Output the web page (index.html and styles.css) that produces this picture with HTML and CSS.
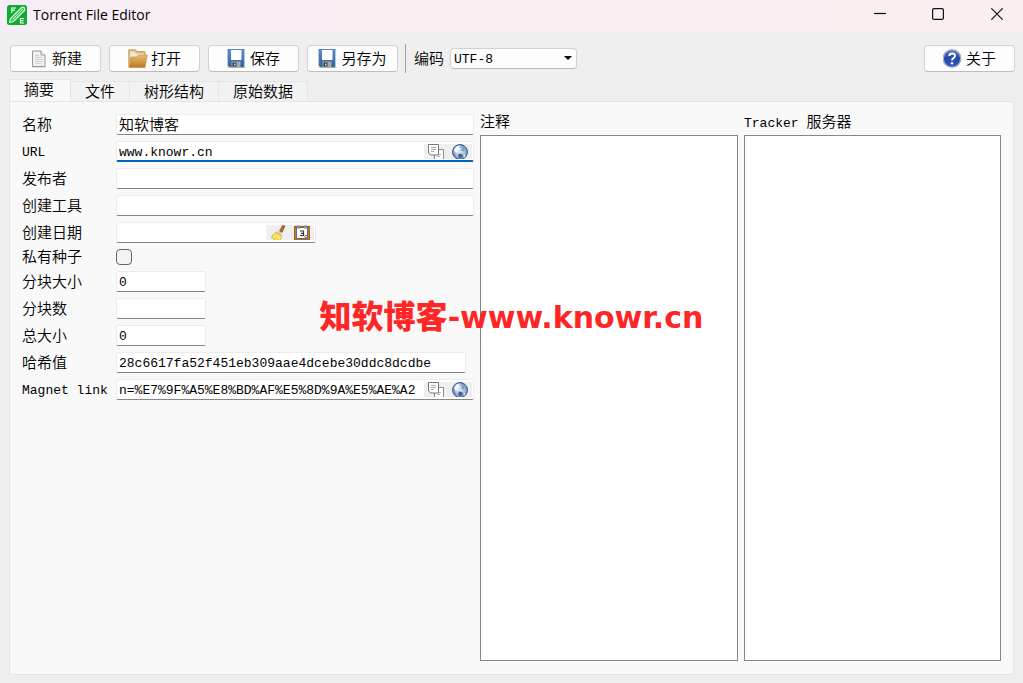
FILE: index.html
```html
<!DOCTYPE html>
<html lang="zh-CN">
<head>
<meta charset="utf-8">
<meta name="viewport" content="width=device-width, initial-scale=1">
<title>Torrent File Editor</title>
<link rel="stylesheet" href="styles.css">
</head>
<body>
<svg class="defs" width="0" height="0" aria-hidden="true">
  <defs>
    <linearGradient id="folder" x1="0" y1="0" x2="0" y2="1"><stop offset="0" stop-color="#e9bd72"/><stop offset="1" stop-color="#b67a22"/></linearGradient>
    <linearGradient id="steel" x1="0" y1="0" x2="0" y2="1"><stop offset="0" stop-color="#5f92cf"/><stop offset="1" stop-color="#2f5c9d"/></linearGradient>
    <linearGradient id="help" x1="0" y1="0" x2="0" y2="1"><stop offset="0" stop-color="#5a7fd6"/><stop offset="0.5" stop-color="#2247ad"/><stop offset="1" stop-color="#3159c4"/></linearGradient>
    <radialGradient id="sea"><stop offset="0" stop-color="#e2ecf7"/><stop offset="0.7" stop-color="#a3bbdb"/><stop offset="1" stop-color="#5676a8"/></radialGradient>
    <symbol id="i-save" viewBox="0 0 20 20">
      <path d="M0 18h19v1H0z" fill="#d5d5d5"/>
      <path d="M1 0h16v18H2.500L1 16.500z" fill="url(#steel)" stroke="#4a78b4" stroke-width=".8"/>
      <path d="M4 1h10.500v10H4z" fill="#fff"/>
      <path d="M4.500 12.500h9V18h-9z" fill="#a9aaa8"/>
      <path d="M5.500 13.500h4v4h-4z" fill="#333"/><path d="M7 14.500h1.500v2H7z" fill="#e8e0c8"/>
    </symbol>
    <symbol id="i-copy" viewBox="0 0 16 15">
      <path d="M6.500 5.500h9V16h-9z" fill="#fff" stroke="#8b8d88"/>
      <path d="M9 10.500h4M9 12.500h3" stroke="#b5b5b2"/>
      <path d="M.5.500h10v10.500H3l-2.500-2z" fill="#fff" stroke="#777974"/>
      <path d="M3 3.500h5M3 5.500h5M3 7.500h3" stroke="#aaa"/>
    </symbol>
    <symbol id="i-globe" viewBox="0 0 16 15">
      <circle cx="8" cy="8" r="7.500" fill="url(#sea)" stroke="#456594"/>
      <path d="M2 5.500L5 2l3-.5L7 4l2 1-3 1.500L5.500 9 3 8z" fill="#f4f7fa"/>
      <path d="M10 2l2 1.500 1 3-2 1-2-1.500 1-2z" fill="#7f9dc6"/>
      <path d="M7 9.500l3 .5 1 2-2 2H7.500L6 12z" fill="#426494"/>
      <path d="M2 9l2 2v2.500z" fill="#7893ba"/>
      <path d="M11.500 12l2-1.500-1 3z" fill="#f4f7fa"/>
    </symbol>
  </defs>
</svg>

<div class="window">
  <header class="titlebar">
    <svg class="logo" viewBox="0 0 20 20" aria-hidden="true">
      <rect width="20" height="20" rx="2.500" fill="#0cae2f"/>
      <path d="M4 3h5M4.800 3v5M4.800 5.200h3.200" stroke="#fff" stroke-width="1.200" fill="none"/>
      <path d="M17 13.500h-3.500v4.500H17M13.500 15.700h3" stroke="#fff" stroke-width="1.200" fill="none"/>
      <path d="M2.500 17.500l1-4L14.500 2.500q2-1 3 .5t-.5 3L6.500 16.500z" fill="#3fc259" stroke="#e0f8e4" stroke-width="1.100"/>
      <path d="M5.500 14.500L16 4" stroke="#e0f8e4" stroke-width=".9"/>
    </svg>
    <h1 class="title">Torrent File Editor</h1>
    <div class="controls">
      <button class="control" aria-label="Minimize"><svg viewBox="0 0 12 12"><path d="M0 5.500h12"/></svg></button>
      <button class="control" aria-label="Maximize"><svg viewBox="0 0 12 12"><rect x=".6" y=".6" width="10.800" height="10.800" rx="1.500"/></svg></button>
      <button class="control" aria-label="Close"><svg viewBox="0 0 12 12"><path d="M.3.300l11.400 11.400M11.700.300L.3 11.700"/></svg></button>
    </div>
  </header>

  <div class="toolbar">
    <button class="button">
      <svg class="icon" viewBox="0 0 20 20" aria-hidden="true"><path d="M3 18h14" stroke="#ccc"/><path d="M3.500 2h8.500l4 4v11.500H3.500z" fill="#f1f1ef" stroke="#969894"/><path d="M12 2v4h4" fill="#fff" stroke="#969894"/><path d="M6 6.500h4M6 8.500h7M6 10.500h8M6 12.500h8M6 14.500h6" stroke="#d2d2d0"/></svg><span>新建</span>
    </button>
    <button class="button">
      <svg class="icon" viewBox="0 0 20 20" aria-hidden="true"><path d="M.8 17.500V.800H7.500L9 2.500h8V15z" fill="#dcb67a" stroke="#c9a468"/><path d="M2 2.500h4.500L8 4.500h8V8H2z" fill="#f3e5ce"/><path d="M1 18.500L3.500 8h5L10.500 6h8.800L17 18.500z" fill="url(#folder)" stroke="#c08d42" stroke-width=".6"/></svg><span>打开</span>
    </button>
    <button class="button"><svg class="icon" aria-hidden="true"><use href="#i-save"/></svg><span>保存</span></button>
    <button class="button"><svg class="icon" aria-hidden="true"><use href="#i-save"/></svg><span>另存为</span></button>
    <span class="separator"></span>
    <label class="encoding-label" for="encoding">编码</label>
    <div class="select-wrap">
      <select id="encoding" class="select"><option>UTF-8</option></select>
      <svg class="arrow" viewBox="0 0 8 4" aria-hidden="true"><path d="M0 0h8L4 4z"/></svg>
    </div>
    <button class="button about">
      <svg class="icon" viewBox="0 0 20 20" aria-hidden="true"><circle cx="9" cy="9.500" r="8.800" fill="url(#help)" stroke="#a9adb5" stroke-width="1.400"/><path d="M6.300 7q.2-2.500 2.900-2.500T12 6.800q0 1.500-1.500 2.300T9 11.500" fill="none" stroke="#fff" stroke-width="1.900"/><circle cx="9" cy="14.300" r="1.200" fill="#fff"/></svg><span>关于</span>
    </button>
  </div>

  <main class="main">
    <div class="tabs" role="tablist">
      <button class="tab active" role="tab" aria-selected="true">摘要</button>
      <button class="tab" role="tab">文件</button>
      <button class="tab" role="tab">树形结构</button>
      <button class="tab" role="tab">原始数据</button>
    </div>
    <section class="panel" role="tabpanel">
      <form class="form">
        <label for="name">名称</label>
        <div class="field"><input id="name" class="cjk" type="text" value="知软博客"></div>
        <label class="latin" for="url">URL</label>
        <div class="field focused">
          <input id="url" type="text" value="www.knowr.cn">
          <button type="button" class="action" aria-label="复制"><svg><use href="#i-copy"/></svg></button>
          <button type="button" class="action" aria-label="打开链接"><svg><use href="#i-globe"/></svg></button>
        </div>
        <label for="publisher">发布者</label>
        <div class="field"><input id="publisher" type="text"></div>
        <label for="creator">创建工具</label>
        <div class="field"><input id="creator" type="text"></div>
        <label for="date">创建日期</label>
        <div class="field date">
          <input id="date" type="text">
          <button type="button" class="action" aria-label="清除"><svg viewBox="0 0 16 15"><path d="M9.500 6l3-5.500 2.500.5-3 6.500z" fill="#ad712d" stroke="#86521b" stroke-width=".7"/><path d="M7 5.500l5 2.500-1 2-5.500-2.500z" fill="#d8cfd3"/><path d="M5.500 7.500l6 2.500-1 4.500-5 .5-4.500-2.500z" fill="#f2dd42" stroke="#d0b322" stroke-width=".8"/><path d="M6 9l-3 4M8.500 10L6 15M10 11l-1 4" stroke="#fff5a1"/></svg></button>
          <button type="button" class="action" aria-label="选择日期"><svg viewBox="0 0 16 15"><path d="M.8 1.800h14.400V15H.8z" fill="#e0a050" stroke="#955a14" stroke-width="1.400"/><path d="M2.500 2.500h11v11h-11z" fill="#fff" stroke="#666b70"/><path d="M4.500 0v4M11.500 0v4" stroke="#9a9fa4" stroke-width="2"/><path d="M6 6h3.500v4.500H6M7 8.300h2.500" fill="none" stroke="#33383d" stroke-width="1.200"/><circle cx="12" cy="11.500" r="1.300" fill="#fff" stroke="#777"/></svg></button>
        </div>
        <label for="private">私有种子</label>
        <input id="private" class="check" type="checkbox">
        <label for="piece">分块大小</label>
        <div class="field short"><input id="piece" type="text" value="0"></div>
        <label for="count">分块数</label>
        <div class="field short"><input id="count" type="text"></div>
        <label for="total">总大小</label>
        <div class="field short"><input id="total" type="text" value="0"></div>
        <label for="hash">哈希值</label>
        <div class="field hash"><input id="hash" type="text" value="28c6617fa52f451eb309aae4dcebe30ddc8dcdbe" readonly></div>
        <label class="latin" for="magnet">Magnet link</label>
        <div class="field">
          <input id="magnet" type="text" value="n=%E7%9F%A5%E8%BD%AF%E5%8D%9A%E5%AE%A2" readonly>
          <button type="button" class="action" aria-label="复制"><svg><use href="#i-copy"/></svg></button>
          <button type="button" class="action" aria-label="打开链接"><svg><use href="#i-globe"/></svg></button>
        </div>
      </form>
      <div class="column">
        <label for="comment">注释</label>
        <textarea id="comment"></textarea>
      </div>
      <div class="column">
        <label for="trackers"><span class="latin">Tracker </span>服务器</label>
        <textarea id="trackers"></textarea>
      </div>
    </section>
  </main>
  <div class="watermark">知软博客<span class="domain">-www.knowr.cn</span></div>
</div>
</body>
</html>
```

FILE: styles.css
```css
* {
  box-sizing: border-box;
}

body {
  margin: 0;
  background: #efefef;
  color: #000;
  font: 350 15px/20px "Noto Sans CJK SC", sans-serif;
}

button,
input,
select,
textarea {
  margin: 0;
  padding: 0;
  border: 0;
  border-radius: 0;
  color: inherit;
  font: inherit;
  outline: 0;
}

.defs {
  position: absolute;
}

.window {
  position: relative;
  display: flex;
  flex-direction: column;
  min-height: 100vh;
}

.titlebar {
  display: flex;
  align-items: center;
  height: 33px;
  padding: 0 0 4px 7px;
  background: linear-gradient(90deg, #f7edf6, #f9eef1 45%, #f9eef0);
}

.logo {
  width: 20px;
  height: 20px;
}

.title {
  margin: 0 0 0 6px;
  font: 14px/20px "Open Sans", sans-serif;
}

.controls {
  display: flex;
  margin-bottom: 2px;
  margin-left: auto;
}

.control {
  display: grid;
  place-items: center;
  width: 58px;
  height: 26px;
  background: none;
}

.control:last-child {
  width: 56px;
  padding-left: 4px;
}

.control svg {
  width: 12px;
  height: 12px;
  fill: none;
  stroke: #111;
  stroke-width: 1.2;
}

.toolbar {
  display: flex;
  align-items: center;
  gap: 8px;
  padding: 11px 8px 6px 10px;
}

.button {
  display: flex;
  align-items: center;
  justify-content: center;
  gap: 3px;
  width: 91px;
  height: 27px;
  border: 1px solid #d2d2d2;
  border-bottom-color: #bcbcbc;
  border-radius: 4px;
  background: #fdfdfd;
}

.button span,
.encoding-label {
  padding-bottom: 2px;
  white-space: nowrap;
}

.icon {
  width: 20px;
  height: 20px;
}

.separator {
  width: 1px;
  height: 29px;
  margin-left: -1px;
  background: #a0a0a0;
}

.select-wrap {
  position: relative;
  width: 127px;
  margin-left: -2px;
}

.select {
  display: block;
  width: 100%;
  height: 21px;
  padding: 2px 20px 0 3px;
  border: 1px solid #d2d2d2;
  border-bottom-color: #bcbcbc;
  border-radius: 4px;
  background: #fdfdfd;
  font: 13px/17px "Liberation Mono", monospace;
  appearance: none;
}

.arrow {
  position: absolute;
  top: 8px;
  right: 5px;
  width: 8px;
  height: 4px;
  pointer-events: none;
}

.about {
  margin-left: auto;
}

.main {
  display: flex;
  flex: 1;
  flex-direction: column;
  padding: 0 9px 8px;
}

.tabs {
  display: flex;
  align-items: flex-end;
  margin-bottom: -1px;
}

.tab {
  height: 21px;
  padding: 0 14px 2px;
  border: 1px solid #e5e5e5;
  border-left: 0;
  background: #f2f2f2;
  line-height: 18px;
}

.tab.active {
  height: 23px;
  padding: 0 16px 3px 14px;
  border-bottom-color: #f9f9f9;
  border-left: 1px solid #e5e5e5;
  border-radius: 2px 2px 0 0;
  background: #f9f9f9;
}

.panel {
  display: grid;
  flex: 1;
  grid-template-columns: minmax(0, 452fr) minmax(0, 258fr) minmax(0, 257fr);
  gap: 6px;
  padding: 12px 12px 13px;
  border: 1px solid #e5e5e5;
  background: #f9f9f9;
}

.form {
  display: grid;
  grid-template-columns: 88px minmax(0, 1fr);
  align-content: start;
  align-items: center;
  gap: 6px;
}

.form label {
  padding-bottom: 2px;
  line-height: 14px;
  white-space: nowrap;
}

.latin,
.form .latin {
  padding: 2px 0 0;
  font-family: "Liberation Mono", monospace;
  font-size: 13px;
  font-weight: 400;
}

.field {
  display: flex;
  align-items: center;
  height: 21px;
  border: 1px solid #ececec;
  border-bottom-color: #868686;
  border-radius: 2px;
  background: #fff;
}

.field input {
  flex: 1;
  min-width: 0;
  height: 19px;
  padding: 2px 0 0 2px;
  background: none;
  font: 13px/17px "Liberation Mono", monospace;
}

.field .cjk {
  padding: 0 0 2px 2px;
  font: 350 15px/17px "Noto Sans CJK SC", sans-serif;
}

.field.focused {
  border-bottom: 2px solid #0067c0;
}

.date {
  width: 200px;
}

.short {
  width: 90px;
}

.hash {
  width: 350px;
}

.action {
  display: grid;
  place-items: center;
  width: 24px;
  height: 15px;
  background: #efefef;
  overflow: hidden;
}

.action:last-child {
  margin-right: 1px;
}

.action svg {
  width: 16px;
  height: 15px;
}

.check {
  width: 16px;
  height: 16px;
  border: 1px solid #666;
  border-radius: 4px;
  background: #f3f3f3;
  appearance: none;
}

.column {
  display: flex;
  flex-direction: column;
}

.column label {
  height: 21px;
  line-height: 14px;
}

.column textarea {
  flex: 1;
  width: 100%;
  padding: 4px;
  border: 1px solid #828790;
  background: #fff;
  resize: none;
}

.watermark {
  position: absolute;
  top: 294px;
  right: 0;
  left: 0;
  color: #ff2626;
  font: 900 32px/40px "Noto Sans CJK SC", sans-serif;
  text-align: center;
  pointer-events: none;
}

.domain {
  font-family: "DejaVu Sans", sans-serif;
  font-size: 30px;
  font-weight: 700;
}
```
